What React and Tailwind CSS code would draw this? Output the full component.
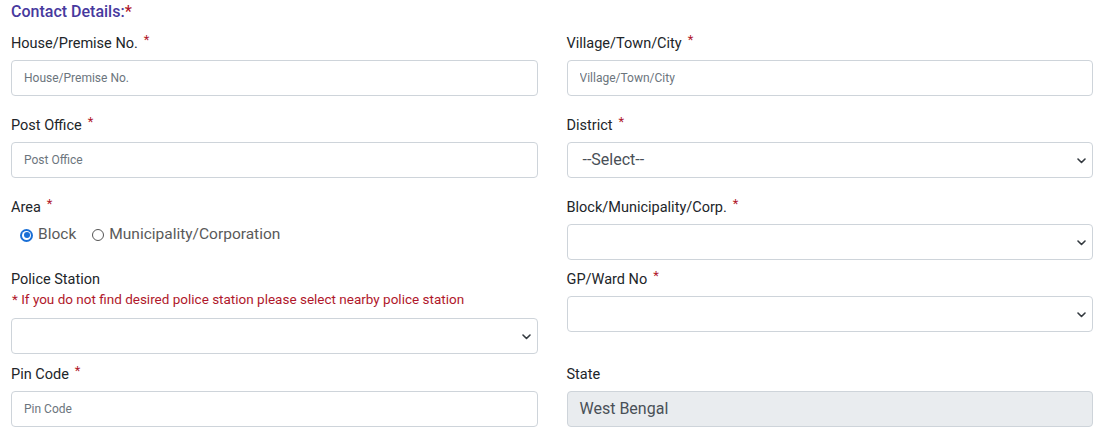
const font = { fontFamily: "Roboto, 'Liberation Sans', sans-serif" };

function Label({ children, req }) {
  return (
    <label className="block h-[21px] leading-[21px] text-[14.5px] text-[#212529] mb-[6px]">
      {children}
      {req && <span className="text-[#b0172b] text-[13px] relative -top-[4px] ml-[6px]">*</span>}
    </label>
  );
}

function TextBox({ placeholder }) {
  return (
    <input
      type="text"
      placeholder={placeholder}
      className="block w-full h-[36px] px-[12px] border border-[#ced4da] rounded-[4px] bg-white text-[12px] text-[#495057] placeholder:text-[#6c757d] outline-none"
    />
  );
}

function Select({ value }) {
  return (
    <div className="relative h-[36px] w-full border border-[#ced4da] rounded-[4px] bg-white flex items-center px-[15px]">
      <span className="text-[16px] text-[#495057]">{value}</span>
      <svg className="absolute right-[6px] top-[15px]" width="9" height="6" viewBox="0 0 9 6" fill="none">
        <path d="M1 1l3.5 3.5L8 1" stroke="#343a40" strokeWidth="1.6" strokeLinecap="round" strokeLinejoin="round" />
      </svg>
    </div>
  );
}

function Radio({ checked, children }) {
  return (
    <span className="flex items-center gap-[5px]">
      {checked ? (
        <span className="w-[13px] h-[13px] rounded-full bg-[#1a6fd6] flex items-center justify-center">
          <span className="w-[9px] h-[9px] rounded-full bg-white flex items-center justify-center">
            <span className="w-[6px] h-[6px] rounded-full bg-[#1a6fd6]" />
          </span>
        </span>
      ) : (
        <span className="w-[12px] h-[12px] rounded-full border border-[#555] bg-white" />
      )}
      <span className="text-[15.5px] text-[#5a5a5a]">{children}</span>
    </span>
  );
}

export default function App() {
  return (
    <div className="w-[1100px] h-[429px] bg-white pl-[11px] pr-[7px] overflow-hidden" style={font}>
      <h3 className="h-[24px] leading-[24px] text-[16px] font-medium text-[#47399e]">
        Contact Details:<span className="text-[#b0172b]">*</span>
      </h3>

      <div className="grid grid-cols-2 gap-x-[29px] mt-[9px]">
        <div>
          <Label req>House/Premise No.</Label>
          <TextBox placeholder="House/Premise No." />
        </div>
        <div>
          <Label req>Village/Town/City</Label>
          <TextBox placeholder="Village/Town/City" />
        </div>
      </div>

      <div className="grid grid-cols-2 gap-x-[29px] mt-[19px]">
        <div>
          <Label req>Post Office</Label>
          <TextBox placeholder="Post Office" />
        </div>
        <div>
          <Label req>District</Label>
          <Select value="--Select--" />
        </div>
      </div>

      <div className="grid grid-cols-2 gap-x-[29px] mt-[19px]">
        <div>
          <Label req>Area</Label>
          <div className="flex items-center gap-[16px] pl-[9px] h-[22px]">
            <Radio checked>Block</Radio>
            <Radio>Municipality/Corporation</Radio>
          </div>
        </div>
        <div>
          <Label req>Block/Municipality/Corp.</Label>
          <Select value="" />
        </div>
      </div>

      <div className="grid grid-cols-2 gap-x-[29px] mt-[10px]">
        <div>
          <div className="h-[19px] leading-[19px] text-[14.5px] text-[#212529]">Police Station</div>
          <div className="h-[20px] leading-[20px] text-[13.5px] text-[#b0172b] pl-[1px]">
            * If you do not find desired police station please select nearby police station
          </div>
          <div className="mt-[9px]">
            <Select value="" />
          </div>
        </div>
        <div>
          <label className="block h-[21px] leading-[19px] text-[14.5px] text-[#212529] mb-[5px]">
            GP/Ward No<span className="text-[#b0172b] text-[13px] relative -top-[4px] ml-[6px]">*</span>
          </label>
          <Select value="" />
        </div>
      </div>

      <div className="grid grid-cols-2 gap-x-[29px] mt-[10px]">
        <div>
          <Label req>Pin Code</Label>
          <TextBox placeholder="Pin Code" />
        </div>
        <div>
          <Label>State</Label>
          <div className="h-[36px] w-full border border-[#ced4da] rounded-[4px] bg-[#e9ecef] flex items-center px-[12px] text-[16px] text-[#495057]">
            West Bengal
          </div>
        </div>
      </div>
    </div>
  );
}
